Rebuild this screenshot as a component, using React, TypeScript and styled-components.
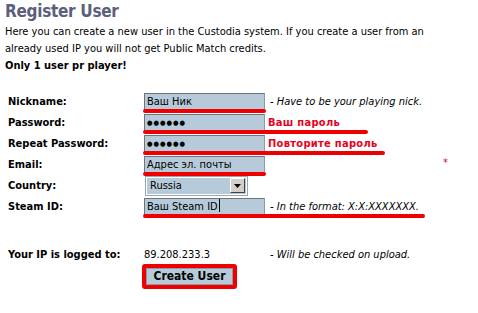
import React from "react";
import styled, { createGlobalStyle } from "styled-components";

const Global = createGlobalStyle`
  html, body { margin: 0; padding: 0; background: #ffffff; }
  body { font-family: "DejaVu Sans Condensed", "DejaVu Sans", sans-serif; color: #000; }
`;

const Page = styled.div`
  width: 478px;
  height: 313px;
  padding: 0 0 0 5px;
  box-sizing: border-box;
  position: relative;
  overflow: hidden;
`;

const Title = styled.h1`
  margin: 0;
  height: 23px;
  font-family: "DejaVu Sans Condensed", "DejaVu Sans", sans-serif;
  font-weight: bold;
  font-size: 17px;
  line-height: 23px;
  letter-spacing: -0.3px;
  color: #5d607c;
`;

const Intro = styled.p`
  margin: 0;
  font-size: 11px;
  line-height: 17px;
`;

const Strong = styled.b`
  font-weight: bold;
`;

const Form = styled.div`
  margin-top: 17px;
  padding-left: 3px;
  display: flex;
  flex-direction: column;
`;

const Row = styled.div<{ $mt?: number }>`
  position: relative;
  display: grid;
  grid-template-columns: 136px 124px 1fr;
  align-items: center;
  height: 21px;
  margin-top: ${(p) => p.$mt ?? 0}px;
`;

const Label = styled.div`
  font-weight: bold;
  font-size: 11px;
`;

const Field = styled.div`
  box-sizing: border-box;
  width: 121px;
  height: 18px;
  background: #b6cad9;
  border: 1px solid #8d9aa6;
  border-top-color: #6b7580;
  border-left-color: #6b7580;
  font-size: 11px;
  line-height: 16px;
  padding-left: 2px;
  white-space: nowrap;
  overflow: hidden;
`;

const Dots = styled.span`
  font-size: 7px;
  letter-spacing: 1px;
  vertical-align: 1px;
`;

const Caret = styled.span`
  display: inline-block;
  width: 1px;
  height: 13px;
  background: #000;
  vertical-align: -2px;
  margin-left: 1px;
`;

const Select = styled.div`
  box-sizing: border-box;
  margin-left: 2px;
  width: 101px;
  height: 18px;
  background: #b6cad9;
  border: 1px solid #ffffff;
  outline: 1px solid #9aa6b2;
  display: flex;
  align-items: center;
  justify-content: space-between;
  font-size: 11px;
  padding-left: 3px;
`;

const SelectBtn = styled.div`
  box-sizing: border-box;
  width: 15px;
  height: 15px;
  margin-right: 1px;
  background: #d4d0c8;
  border: 1px solid;
  border-color: #fff #404040 #404040 #fff;
  display: flex;
  align-items: center;
  justify-content: center;
`;

const Hint = styled.div`
  font-style: italic;
  font-size: 11px;
  padding-left: 2px;
`;

const RedNote = styled.div`
  color: #e8001c;
  font-weight: bold;
  font-size: 11px;
  letter-spacing: 0.3px;
`;

const Star = styled.span`
  position: absolute;
  left: 435px;
  top: 2px;
  color: #d01020;
  font-size: 11px;
`;

const Underline = styled.span`
  position: absolute;
  height: 4px;
  border-radius: 2px;
  background: #ee0000;
  top: 18px;
`;

const ButtonWrap = styled.div`
  margin-left: 134px;
  margin-top: -1px;
  width: 95px;
  height: 25px;
  box-sizing: border-box;
  border: 4px solid #ee0000;
  border-radius: 3px;
  display: flex;
  align-items: center;
  justify-content: center;
`;

const Button = styled.button`
  box-sizing: border-box;
  width: 87px;
  height: 17px;
  padding: 0;
  background: #b6cad9;
  border: 1px solid #8d9aa6;
  font-family: "DejaVu Sans Condensed", "DejaVu Sans", sans-serif;
  font-weight: bold;
  font-size: 12px;
  line-height: 15px;
  color: #000;
`;

export default function App() {
  return (
    <Page>
      <Global />
      <Title>Register User</Title>
      <Intro>
        Here you can create a new user in the Custodia system. If you create a user from an
        <br />
        already used IP you will not get Public Match credits.
        <br />
        <Strong>Only 1 user pr player!</Strong>
      </Intro>
      <Form>
        <Row>
          <Label>Nickname:</Label>
          <Field>Ваш Ник</Field>
          <Hint>- Have to be your playing nick.</Hint>
          <Underline style={{ left: 135, width: 123 }} />
        </Row>
        <Row>
          <Label>Password:</Label>
          <Field><Dots>●●●●●●</Dots></Field>
          <RedNote>Ваш пароль</RedNote>
          <Underline style={{ left: 135, width: 225 }} />
        </Row>
        <Row>
          <Label>Repeat Password:</Label>
          <Field><Dots>●●●●●●</Dots></Field>
          <RedNote>Повторите пароль</RedNote>
          <Underline style={{ left: 135, width: 242 }} />
        </Row>
        <Row>
          <Label>Email:</Label>
          <Field>Адрес эл. почты</Field>
          <div />
          <Star>*</Star>
          <Underline style={{ left: 135, width: 123 }} />
        </Row>
        <Row>
          <Label>Country:</Label>
          <Select>
            Russia
            <SelectBtn>
              <svg width="7" height="4" viewBox="0 0 7 4">
                <path d="M0 0h7L3.5 4z" fill="#000" />
              </svg>
            </SelectBtn>
          </Select>
          <div />
        </Row>
        <Row>
          <Label>Steam ID:</Label>
          <Field>Ваш Steam ID<Caret /></Field>
          <Hint>- In the format: X:X:XXXXXXX.</Hint>
          <Underline style={{ left: 135, width: 282 }} />
        </Row>
        <Row $mt={27}>
          <Label>Your IP is logged to:</Label>
          <Intro>89.208.233.3</Intro>
          <Hint>- Will be checked on upload.</Hint>
        </Row>
        <ButtonWrap>
          <Button>Create User</Button>
        </ButtonWrap>
      </Form>
    </Page>
  );
}
